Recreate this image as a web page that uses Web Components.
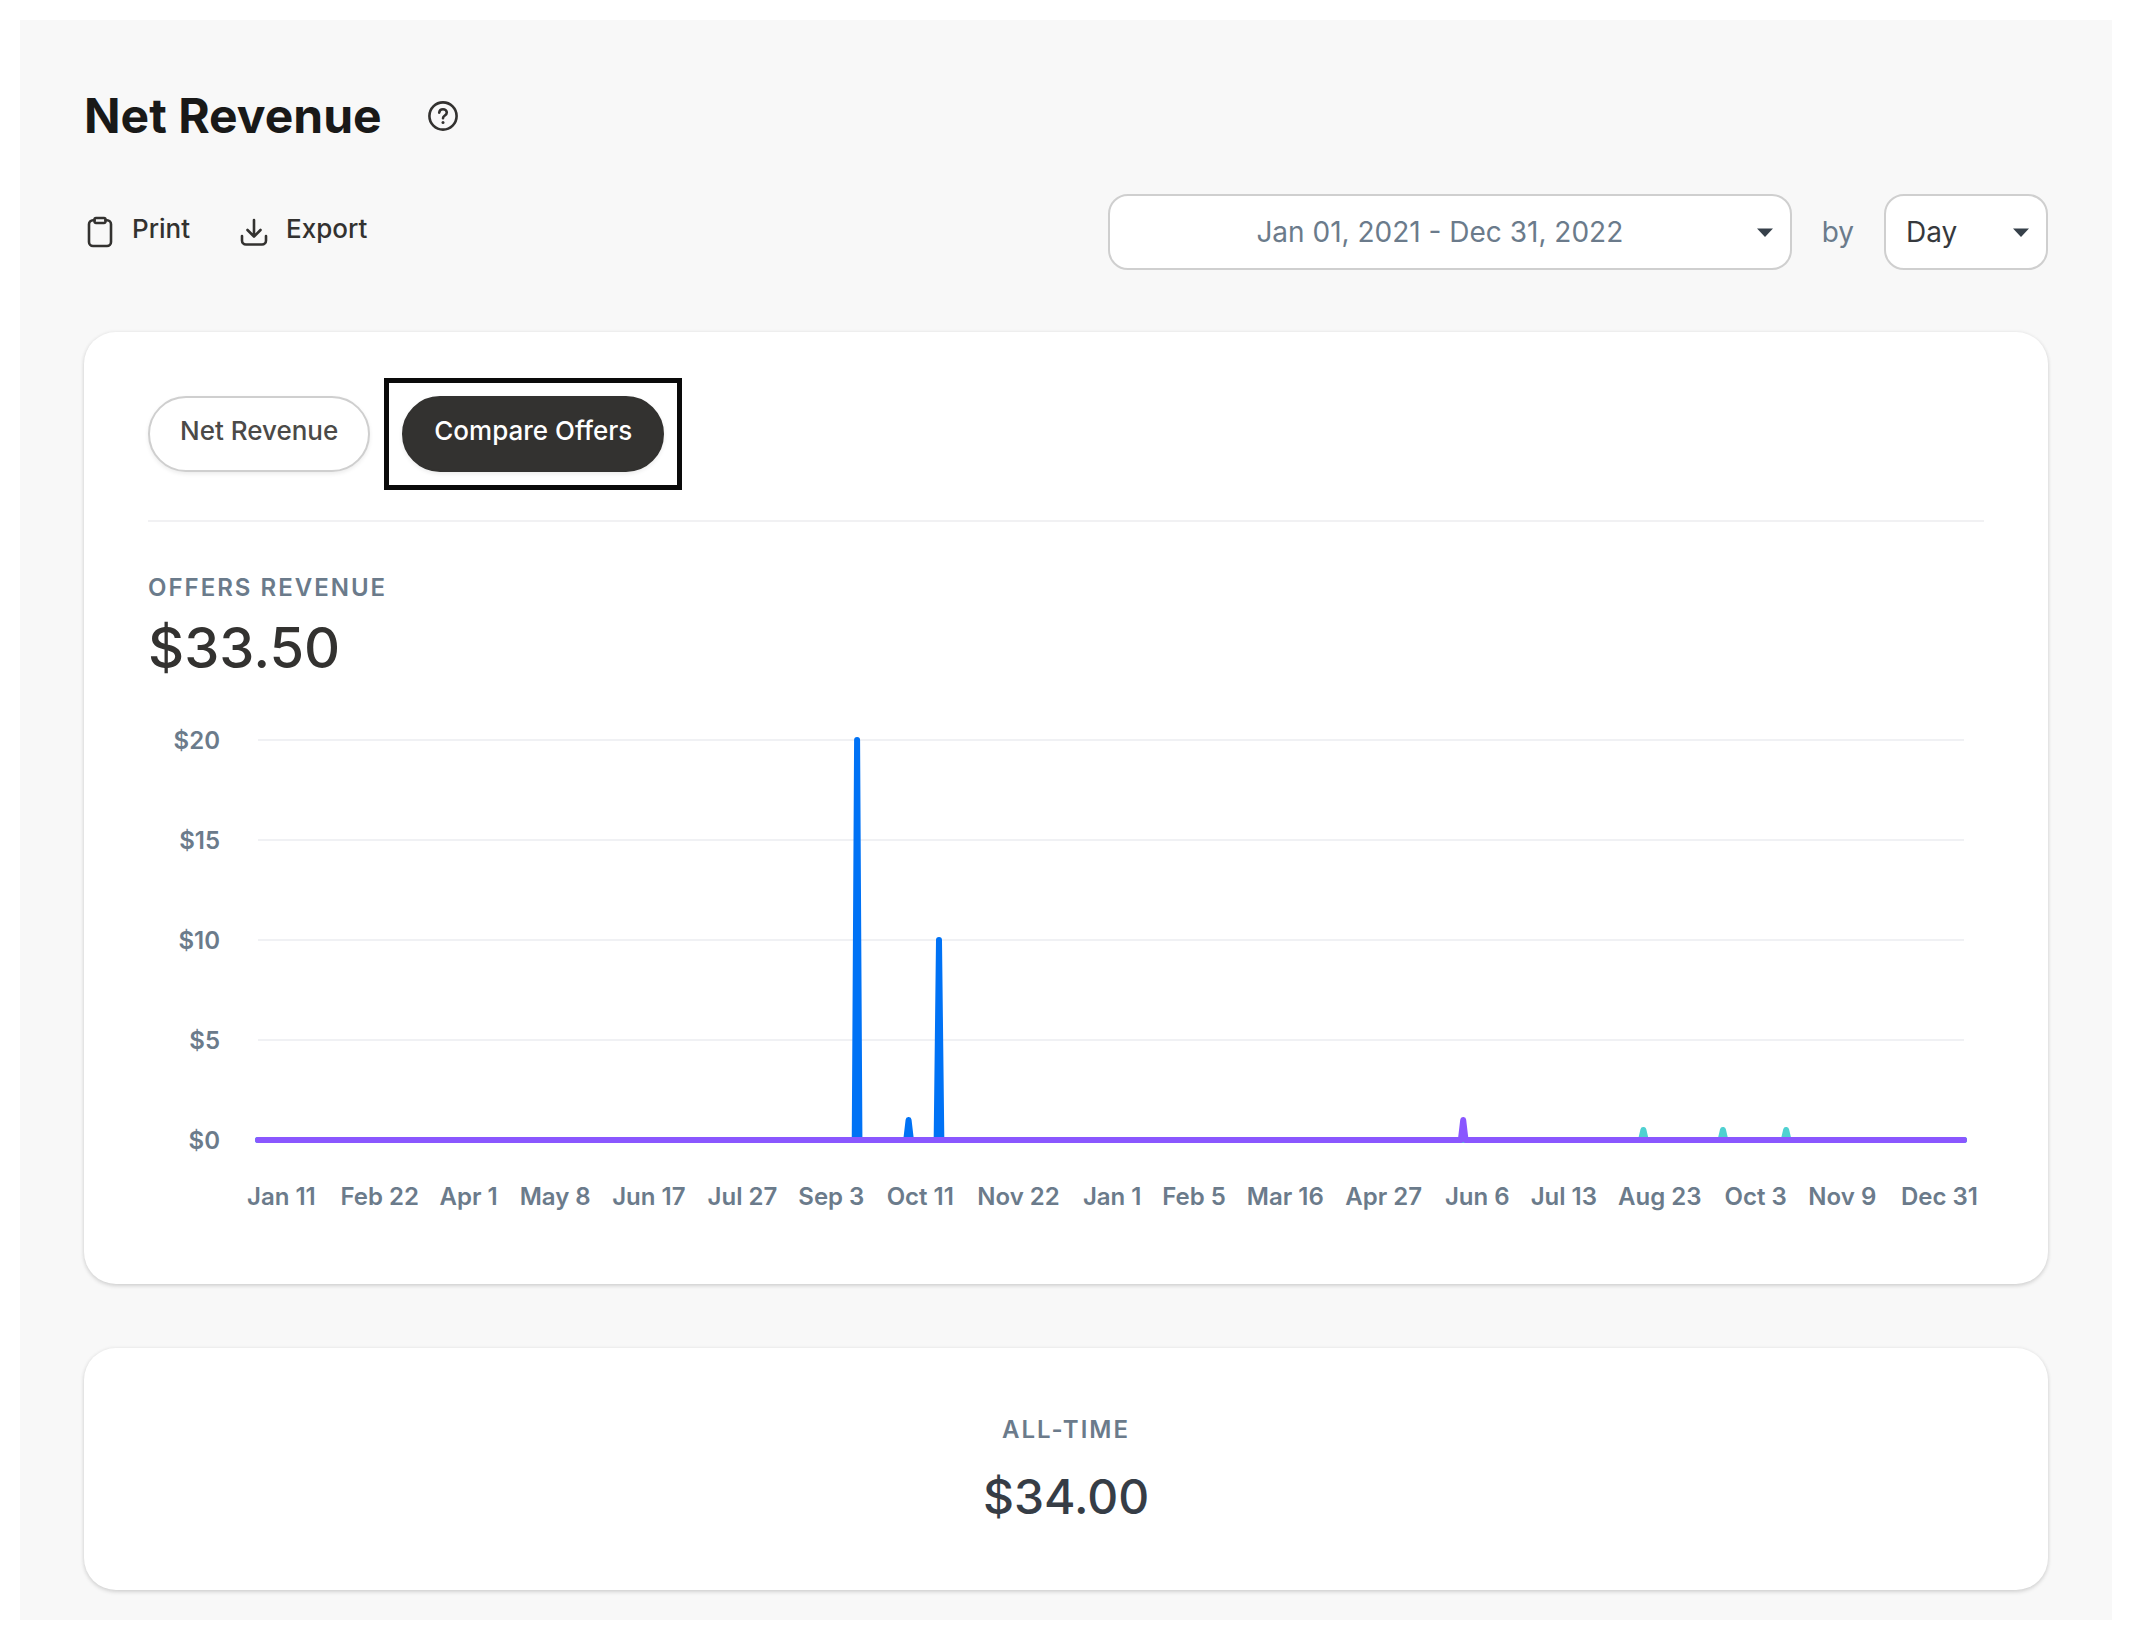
<!DOCTYPE html>
<html lang="en">

<head>
  <meta charset="UTF-8">
  <meta name="viewport" content="width=device-width, initial-scale=1.0">
  <title>Net Revenue</title>
  <style>
    :root {
      --ink: #333230;
      --muted: #6b7b8b;
      --line: #cfcfcf;
      --rule: #f1f1f3;
    }

    body {
      margin: 0;
      background: #fff;
      color: var(--ink);
      font-family: Inter, "Liberation Sans", sans-serif;
    }
  </style>
</head>

<body>
  <revenue-page></revenue-page>

  <template id="page">
    <style>
      :host {
        display: block;
        margin: 20px;
        padding: 64px 64px 30px;
        background: #f8f8f8;
      }
      header {
        display: flex;
        align-items: center;
        gap: 45px;
        height: 64px;
      }
      h1 {
        margin: 0;
        color: #191918;
        font-size: 48px;
        line-height: 60px;
        font-weight: 700;
      }
      .help {
        display: flex;
        padding: 0;
        border: none;
        background: none;
        color: var(--ink);
      }
      .toolbar {
        display: flex;
        align-items: center;
        justify-content: space-between;
        margin: 46px 0 62px;
      }
      .actions {
        display: flex;
        gap: 48px;
      }
      .tabs {
        display: flex;
        gap: 32px;
        padding-bottom: 48px;
        border-bottom: 2px solid var(--rule);
        margin-bottom: 50px;
      }
      revenue-chart {
        margin-top: 58px;
      }
      main {
        display: grid;
        gap: 64px;
      }
    </style>
    <header>
      <h1>Net Revenue</h1>
      <button class="help" aria-label="Help">
        <svg width="32" height="32" viewBox="0 0 32 32" fill="none" stroke="currentColor" stroke-width="2.6" stroke-linecap="round" stroke-linejoin="round">
          <circle cx="16" cy="16" r="13.6" />
          <path d="M12.2 12.6C12.5 10.4 14 9.3 16 9.3C18.2 9.3 19.8 10.7 19.8 12.6C19.8 15.6 16 15.4 16 18.2" />
          <circle cx="16" cy="22.4" r="1.5" fill="currentColor" stroke="none" />
        </svg>
      </button>
    </header>
    <div class="toolbar">
      <div class="actions">
        <icon-button>
          <svg slot="icon" width="32" height="32" viewBox="0 0 32 32" fill="none" stroke="currentColor" stroke-width="2.6" stroke-linecap="round" stroke-linejoin="round">
            <path d="M10.5 4.2H9A4 4 0 0 0 5 8.2V26A4 4 0 0 0 9 30H23A4 4 0 0 0 27 26V8.2A4 4 0 0 0 23 4.2H21.5" />
            <path d="M12 2H20A1.5 1.5 0 0 1 21.5 3.5V5.5A1.5 1.5 0 0 1 20 7H12A1.5 1.5 0 0 1 10.5 5.5V3.5A1.5 1.5 0 0 1 12 2Z" />
          </svg>
          Print
        </icon-button>
        <icon-button>
          <svg slot="icon" width="32" height="32" viewBox="0 0 32 32" fill="none" stroke="currentColor" stroke-width="2.6" stroke-linecap="round" stroke-linejoin="round">
            <path d="M16 4V20M9.5 14L16 20.5L22.5 14" />
            <path d="M4 20V24.5A4 4 0 0 0 8 28.5H24A4 4 0 0 0 28 24.5V20" />
          </svg>
          Export
        </icon-button>
      </div>
      <period-picker></period-picker>
    </div>
    <main>
      <page-card>
        <div class="tabs">
          <pill-tab>Net Revenue</pill-tab>
          <pill-tab active>Compare Offers</pill-tab>
        </div>
        <money-stat label="OFFERS REVENUE">$33.50</money-stat>
        <revenue-chart></revenue-chart>
      </page-card>
      <page-card>
        <money-stat centered label="ALL-TIME">$34.00</money-stat>
      </page-card>
    </main>
  </template>

  <template id="card">
    <style>
      :host {
        display: block;
        padding: 64px;
        border-radius: 32px;
        background: #fff;
        box-shadow: 0 2px 4px rgba(0, 0, 0, .14), 0 0 4px rgba(0, 0, 0, .06);
      }
    </style>
    <slot></slot>
  </template>

  <template id="icon-btn">
    <style>
      :host {
        display: block;
      }
      button {
        display: flex;
        align-items: center;
        gap: 16px;
        padding: 0;
        border: none;
        background: none;
        color: var(--ink);
        font: 500 26px/32px Inter, "Liberation Sans", sans-serif;
      }
      .icon {
        display: flex;
      }
      .text {
        padding-bottom: 6px;
      }
    </style>
    <button>
      <span class="icon"><slot name="icon"></slot></span>
      <span class="text"><slot></slot></span>
    </button>
  </template>

  <template id="picker">
    <style>
      :host {
        display: flex;
        flex: 0 1 940px;
        align-items: center;
        gap: 30px;
        color: var(--muted);
        font-size: 28px;
        line-height: 36px;
      }
      button,
      select {
        box-sizing: border-box;
        width: 100%;
        height: 76px;
        border: 2px solid var(--line);
        border-radius: 20px;
        background: #fff;
        font: inherit;
      }
      button {
        padding: 0 40px 0 20px;
        color: var(--muted);
        text-align: center;
      }
      select {
        appearance: none;
        padding: 0 20px;
        color: #36393d;
      }
      .field {
        position: relative;
      }
      .range {
        flex: 1;
      }
      .unit {
        flex: 0 0 164px;
      }
      svg {
        position: absolute;
        top: 34px;
        right: 18px;
        fill: #36404a;
        pointer-events: none;
      }
    </style>
    <div class="field range">
      <button>Jan 01, 2021 - Dec 31, 2022</button>
      <svg width="18" height="10" viewBox="0 0 18 10"><path d="M1 0.5H17L9 9Z" /></svg>
    </div>
    <label for="unit">by</label>
    <div class="field unit">
      <select id="unit">
        <option>Day</option>
        <option>Week</option>
        <option>Month</option>
      </select>
      <svg width="18" height="10" viewBox="0 0 18 10"><path d="M1 0.5H17L9 9Z" /></svg>
    </div>
  </template>

  <template id="pill">
    <style>
      :host {
        display: block;
      }
      button {
        box-sizing: border-box;
        height: 76px;
        padding: 0 30px 6px;
        border: 2px solid var(--line);
        border-radius: 38px;
        background: #fff;
        color: #4b4a48;
        box-shadow: 0 2px 4px rgba(0, 0, 0, .08);
        font: 500 26px/32px Inter, "Liberation Sans", sans-serif;
      }
      :host([active]) {
        outline: 5px solid #0a0a0a;
        outline-offset: 13px;
      }
      :host([active]) button {
        border-color: var(--ink);
        background: var(--ink);
        color: #fff;
      }
    </style>
    <button><slot></slot></button>
  </template>

  <template id="stat">
    <style>
      :host {
        display: grid;
        gap: 10px;
      }
      .label {
        color: var(--muted);
        font-size: 24px;
        line-height: 32px;
        font-weight: 600;
        letter-spacing: 2px;
      }
      .value {
        font-size: 56px;
        line-height: 68px;
        font-weight: 500;
      }
      :host([centered]) {
        gap: 20px;
        text-align: center;
      }
      :host([centered]) .label {
        line-height: 36px;
      }
      :host([centered]) .value {
        color: #363d46;
        font-size: 48px;
        line-height: 58px;
      }
    </style>
    <div class="label"></div>
    <div class="value"><slot></slot></div>
  </template>

  <template id="chart">
    <style>
      :host {
        display: grid;
        grid-template-columns: 72px 1fr;
        column-gap: 38px;
        padding-right: 20px;
        color: var(--muted);
        font-size: 24px;
        line-height: 32px;
        font-weight: 600;
      }
      .y-axis {
        display: flex;
        flex-direction: column;
        justify-content: space-between;
        margin: -15px 0 -17px;
        text-align: right;
      }
      svg {
        display: block;
        width: 100%;
        overflow: visible;
      }
      .plot {
        height: 400px;
      }
      .plot * {
        vector-effect: non-scaling-stroke;
      }
      .x-axis {
        grid-column: 2;
        height: 80px;
        fill: currentColor;
      }
      polyline {
        fill: none;
        stroke-width: 6;
        stroke-linecap: round;
        stroke-linejoin: round;
      }
    </style>
    <div class="y-axis"></div>
    <svg class="plot" viewBox="0 0 729 20" preserveAspectRatio="none"></svg>
    <svg class="x-axis"></svg>
  </template>

  <script>
    // attach an open shadow root filled from a template
    function render(el, id) {
      const shadow = el.attachShadow({ mode: 'open' });
      shadow.appendChild(document.getElementById(id).content.cloneNode(true));
      return shadow;
    }

    class PageCard extends HTMLElement {
      constructor() {
        super();
        render(this, 'card');
      }
    }

    class IconButton extends HTMLElement {
      constructor() {
        super();
        render(this, 'icon-btn');
      }
    }

    class PeriodPicker extends HTMLElement {
      constructor() {
        super();
        render(this, 'picker');
      }
    }

    class PillTab extends HTMLElement {
      constructor() {
        super();
        render(this, 'pill');
      }
    }

    class MoneyStat extends HTMLElement {
      constructor() {
        super();
        this.shadow = render(this, 'stat');
      }

      connectedCallback() {
        this.shadow.querySelector('.label').textContent = this.getAttribute('label');
      }
    }

    const LAST_DAY = 729;
    const MAX = 20;

    // day index since Jan 1, 2021 -> amount
    const series = [
      { color: '#0072f5', sales: { 256: 20, 278: 1, 291: 10 } },
      { color: '#4fd1d1', sales: { 592: 0.5, 626: 0.5, 653: 0.5 } },
      { color: '#8a57ff', sales: { 515: 1 } },
    ];

    const ticks = {
      2021: ['Jan 11', 'Feb 22', 'Apr 1', 'May 8', 'Jun 17', 'Jul 27', 'Sep 3', 'Oct 11', 'Nov 22'],
      2022: ['Jan 1', 'Feb 5', 'Mar 16', 'Apr 27', 'Jun 6', 'Jul 13', 'Aug 23', 'Oct 3', 'Nov 9', 'Dec 31'],
    };

    class RevenueChart extends HTMLElement {
      constructor() {
        super();
        const shadow = render(this, 'chart');
        const levels = [20, 15, 10, 5, 0];

        shadow.querySelector('.y-axis').innerHTML = levels.map(v => `<span>$${v}</span>`).join('');

        const grid = levels.map(v =>
          `<line x1="0" x2="${LAST_DAY}" y1="${MAX - v}" y2="${MAX - v}" stroke="#f0f1f4" stroke-width="2" />`);
        const lines = series.map(({ color, sales }) => {
          const points = [];
          for (let day = 0; day <= LAST_DAY; day++) {
            points.push(`${day},${MAX - (sales[day] || 0)}`);
          }
          return `<polyline points="${points.join(' ')}" stroke="${color}" />`;
        });
        shadow.querySelector('.plot').innerHTML = grid.join('') + lines.join('');

        let labels = '';
        for (const year in ticks) {
          for (const text of ticks[year]) {
            const day = Math.round((new Date(`${text}, ${year} UTC`) - Date.UTC(2021, 0, 1)) / 86400000);
            const last = day === LAST_DAY;
            // the last label hangs just past the plot edge
            labels += `<text x="${day / LAST_DAY * 100}%" y="65" dx="${last ? 14 : 0}" text-anchor="${last ? 'end' : 'middle'}">${text}</text>`;
          }
        }
        shadow.querySelector('.x-axis').innerHTML = labels;
      }
    }

    class RevenuePage extends HTMLElement {
      constructor() {
        super();
        render(this, 'page');
      }
    }

    customElements.define('page-card', PageCard);
    customElements.define('icon-button', IconButton);
    customElements.define('period-picker', PeriodPicker);
    customElements.define('pill-tab', PillTab);
    customElements.define('money-stat', MoneyStat);
    customElements.define('revenue-chart', RevenueChart);
    customElements.define('revenue-page', RevenuePage);
  </script>
</body>

</html>
